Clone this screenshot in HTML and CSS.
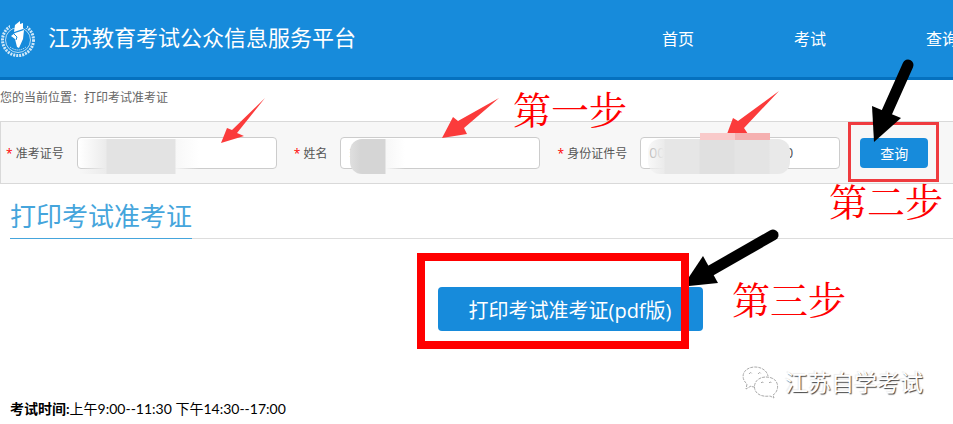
FILE: index.html
```html
<!DOCTYPE html>
<html lang="zh-CN">
<head>
    <meta charset="UTF-8">
    <meta name="viewport" content="width=device-width, initial-scale=1.0">
    <title>打印考试准考证</title>
    <link rel="stylesheet" href="styles.css">
</head>
<body>
    <div class="page">
        <header>
            <svg class="logo" viewBox="0 0 36 38" aria-hidden="true">
                <circle class="wreath" cx="18" cy="20" r="15.5"/>
                <circle class="wreath-inner" cx="18" cy="20" r="12.5"/>
                <path class="motto" d="M10 27q8 6 16 0"/>
                <path class="gap" d="M10 0h17v8H10z"/>
                <path class="torch" d="M15 5l5-4v3l3-1v6l-9 3z"/>
                <path class="torch" d="M11 16l4-3 9-3-1 9-4 9-2-1-2-8z"/>
                <path class="torch-line" d="M14 14l3 3-1 3"/>
            </svg>
            <h1>江苏教育考试公众信息服务平台</h1>
            <nav>
                <a href="#">首页</a>
                <a href="#">考试</a>
                <a href="#">查询</a>
            </nav>
        </header>

        <div class="crumb">您的当前位置：打印考试准考证</div>

        <form class="search-bar">
            <div class="field">
                <label for="zkzh"><i>*</i> 准考证号</label>
                <div class="box">
                    <input type="text" id="zkzh">
                    <span class="mask mask-number"></span>
                </div>
            </div>
            <div class="field">
                <label for="xm"><i>*</i> 姓名</label>
                <div class="box">
                    <input type="text" id="xm" value="李">
                    <span class="mask mask-name"></span>
                </div>
            </div>
            <div class="field">
                <label for="sfz"><i>*</i> 身份证件号</label>
                <div class="box">
                    <input type="text" id="sfz" value="000000000000000000">
                    <span class="mask mask-id"></span>
                </div>
            </div>
            <button type="button" class="btn">查询</button>
        </form>

        <main>
            <div class="title"><h2>打印考试准考证</h2></div>
            <div class="print">
                <button type="button" class="btn btn-print">打印考试准考证(pdf版)</button>
            </div>
            <p class="time"><b>考试时间:</b>上午9:00--11:30 下午14:30--17:00</p>
        </main>

        <!-- 操作步骤标注 -->
        <svg class="marks" width="953" height="424" aria-hidden="true">
            <g class="red-arrow">
                <path d="M265 98L237 133 244 136 221 143 227 128 232 130z"/>
                <path d="M499 98L464 128 467 134 442 138 453 117 458 121z"/>
                <path d="M779 91L744 128 748 134 727 134 733 118 738 121z"/>
            </g>
            <path class="pink" d="M700 133h35v7h-35z"/>
            <path class="pink pink-dark" d="M735 133h35v7h-35z"/>
            <path class="frame" d="M849.500 123.500h88v57h-88z"/>
            <g class="black-arrow">
                <path class="shaft" d="M908 65L887 112"/>
                <path d="M872 106L901 118 874 142z"/>
                <path class="shaft" d="M773 235L710 271"/>
                <path d="M703 256L718 283 689 286V277z"/>
            </g>
            <path class="frame-big" d="M421 257h264v88H421z"/>
        </svg>
        <span class="step step-1">第一步</span>
        <span class="step step-2">第二步</span>
        <span class="step step-3">第三步</span>

        <div class="watermark">
            <svg viewBox="0 0 38 34" aria-hidden="true">
                <path d="M14 22q-3 0-4-1l-5 3 1-5C-2 12 3 2 14 2c7 0 12 4 13 9"/>
                <path d="M25 12c14 0 14 14 7 18l1 3-4-2C9 34 9 12 25 12z"/>
                <path d="M8 9q2-3 3 0M17 9q2-3 3 0M20 18q1-2 3 0M28 18q1-2 3 0"/>
            </svg>
            <span>江苏自学考试</span>
        </div>
    </div>
</body>
</html>
```
FILE: styles.css
```css
* {
    box-sizing: border-box;
}
body {
    margin: 0;
    background-color: #fff;
    color: #000;
    font-family: "Open Sans", "Noto Sans CJK SC", sans-serif;
    font-size: 14px;
}
.page {
    position: relative;
    overflow: hidden;
}
header {
    display: flex;
    align-items: center;
    height: 80px;
    background-color: #178bdb; /* 蓝色 */
    border-bottom: 3px solid #0571bf;
    color: #fff;
    white-space: nowrap;
}
.logo {
    flex: none;
    width: 36px;
    height: 38px;
    fill: none;
    stroke: #fff;
}
.wreath {
    stroke-width: 3;
    stroke-dasharray: 2 1;
    opacity: 0.8;
}
.wreath-inner {
    stroke-width: 1;
    opacity: 0.7;
}
.motto {
    stroke-dasharray: 1 1;
}
.gap {
    fill: #178bdb;
    stroke: none;
}
.torch {
    fill: #fff;
    stroke: none;
}
.torch-line {
    stroke: #178bdb;
    stroke-width: 1;
}
header h1 {
    margin: 0 0 0 12px;
    padding-bottom: 4px;
    font-size: 22px;
    font-weight: 400;
    line-height: 32px;
}
nav {
    display: flex;
    margin-left: 256px;
}
nav a {
    padding: 0 50px;
    color: #fff;
    font-size: 16px;
    line-height: 24px;
    text-decoration: none;
}
.crumb {
    height: 41px;
    color: #666;
    font-size: 12px;
    line-height: 36px;
}
.search-bar {
    display: flex;
    align-items: center;
    height: 63px;
    padding-left: 5px;
    background-color: #f7f7f7;
    border: 1px solid #d9d9d9;
    border-right: 0;
    white-space: nowrap;
}
.field {
    display: flex;
    align-items: center;
    gap: 13px;
    margin-right: 17px;
}
.field label {
    color: #555;
    font-size: 12px;
}
.field i {
    color: #f00;
    font-style: normal;
}
.box {
    position: relative;
}
.box input {
    display: block;
    width: 200px;
    height: 32px;
    padding: 0 8px;
    background-color: #fff;
    border: 1px solid #ccc;
    border-radius: 4px;
    color: #555;
    font-family: inherit;
    font-size: 14px;
}
/* 个人信息遮挡 */
.mask {
    position: absolute;
    top: 2px;
    height: 35px;
}
.mask-number {
    left: 2px;
    width: 120px;
    background: linear-gradient(90deg, rgba(245, 245, 245, 0), #ebebeb 27px, #e3e3e3 28px, #e3e3e3 96px, rgba(247, 247, 247, 0.9) 97px, rgba(255, 255, 255, 0));
}
.mask-name {
    left: 10px;
    width: 55px;
    border-radius: 12px 0 0 12px;
    background: linear-gradient(90deg, #dfdfdf, #d5d5d5 10px, #d5d5d5 35px, #f7f7f7 36px, rgba(255, 255, 255, 0));
}
.mask-id {
    left: 8px;
    width: 142px;
    border-radius: 12px;
    background: linear-gradient(90deg, rgba(244, 244, 244, 0.6), #ebebeb 16px, #e6e6e6 17px, #e6e6e6 51px, #e0e0e0 52px, #e0e0e0 86px, #e4e4e4 87px, #e4e4e4 121px, #e9e9e9 122px);
}
.btn {
    height: 30px;
    margin-left: 3px;
    padding: 0 20px;
    background-color: #178bdb;
    border: 0;
    border-radius: 4px;
    color: #fff;
    font-family: inherit;
    font-size: 14px;
    cursor: pointer;
}
main {
    padding-left: 10px;
}
.title {
    height: 55px;
    border-bottom: 1px solid #ddd;
}
.title h2 {
    display: inline-block;
    height: 55px;
    margin: 0;
    border-bottom: 1px solid #45a5dc;
    color: #45a5dc;
    font-size: 26px;
    font-weight: 400;
    line-height: 64px;
}
.print {
    min-width: 1120px;
    padding-top: 48px;
    text-align: center;
}
.print .btn-print {
    height: 44px;
    margin: 0;
    padding: 0 31px;
    font-size: 20px;
}
.time {
    margin: 67px 0 0;
    padding-bottom: 4px;
    font-family: Lato, "Noto Sans CJK SC", sans-serif;
    line-height: 22px;
}
.marks {
    position: absolute;
    top: 0;
    left: 0;
    pointer-events: none;
}
.pink {
    fill: #f9caca;
}
.pink-dark {
    fill: #f5b0b0;
}
.red-arrow {
    fill: #fb3b3b;
}
.frame {
    fill: none;
    stroke: #ef3b3f;
    stroke-width: 3;
}
.frame-big {
    fill: none;
    stroke: #f00;
    stroke-width: 8;
}
.shaft {
    stroke: #000;
    stroke-width: 11;
    stroke-linecap: round;
}
.step {
    position: absolute;
    color: #f00;
    font-family: "Liberation Serif", "Noto Serif CJK SC", "Noto Sans CJK SC", serif;
    font-size: 38px;
    font-weight: 400;
    line-height: 40px;
    white-space: nowrap;
}
.step-1 {
    top: 91px;
    left: 513px;
}
.step-2 {
    top: 183px;
    left: 829px;
}
.step-3 {
    top: 281px;
    left: 732px;
}
.watermark {
    position: absolute;
    top: 365px;
    left: 741px;
    display: flex;
    align-items: center;
    gap: 6px;
    color: #fff;
    font-size: 23px;
    line-height: 34px;
    text-shadow: 1px 1px 1px #444, -1px -1px 1px #eee;
    white-space: nowrap;
}
.watermark svg {
    width: 38px;
    height: 34px;
    fill: #fff;
    stroke: #aaa;
    stroke-width: 1;
    stroke-dasharray: 3 1;
}
```
